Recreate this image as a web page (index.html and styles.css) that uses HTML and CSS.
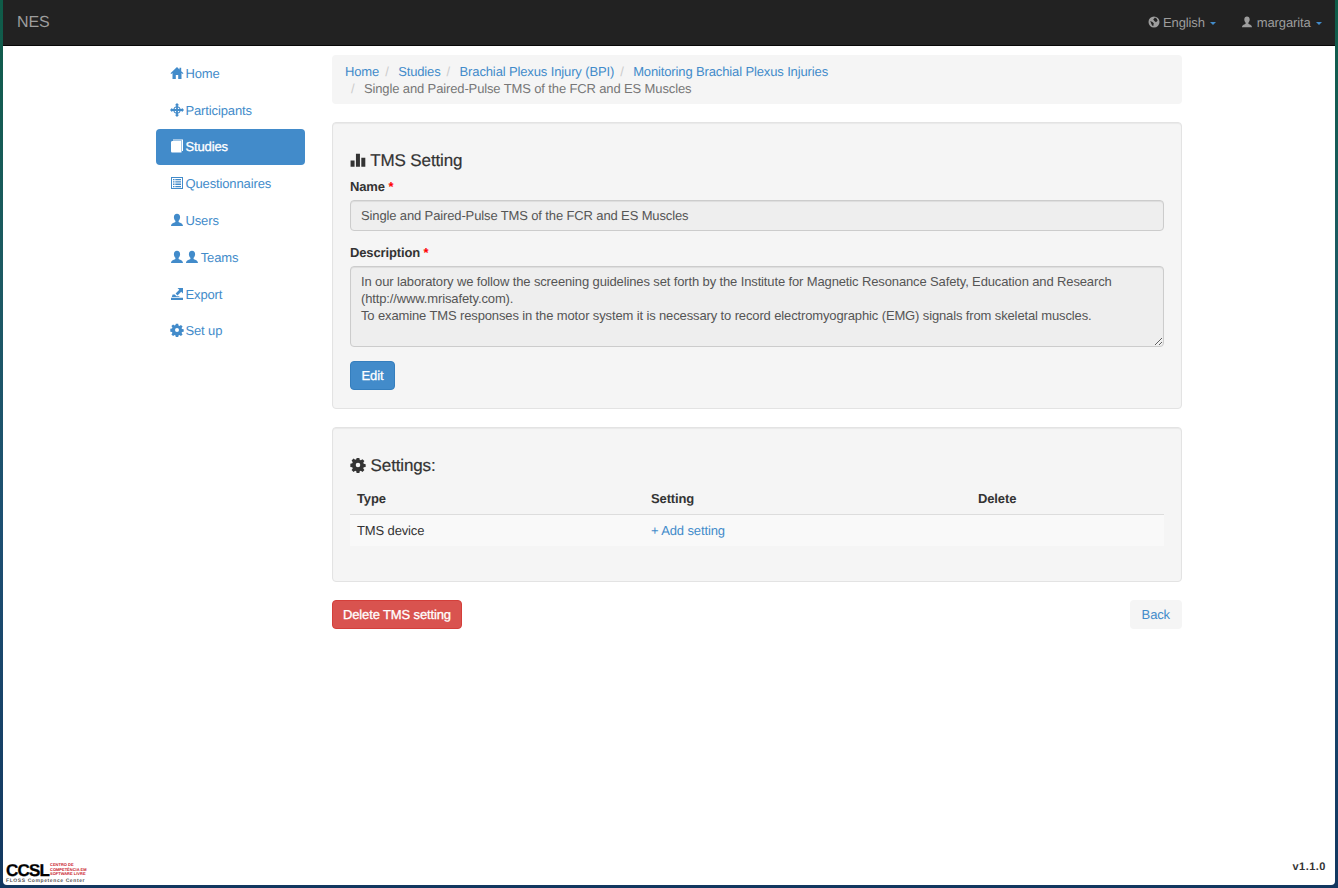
FILE: index.html
```html
<!DOCTYPE html>
<html>
<head>
<meta charset="UTF-8">
<title>NES</title>
<link rel="stylesheet" href="styles.css">
</head>
<body>
	<div class="desktop">
		<div class="page">
			<nav class="navbar">
				<a class="brand">NES</a>
				<div class="nav-right">
					<a class="nav-item">
						<svg class="icon" viewBox="0 0 12 12"><path fill-rule="evenodd" d="M6 .5a5.500 5.500 0 1 0 0 11 5.500 5.500 0 0 0 0-11zM7 1.600 8.800 2.700 9.600 4.800 7.900 6.200 6.400 5 5.200 3.400zM2.200 5 4.400 6l1.400 1.300-.5 2.700-1.200-.6-1-2.200z"/></svg>
						English <span class="caret"></span>
					</a>
					<a class="nav-item">
						<svg class="icon" viewBox="0 0 12 12"><path d="M6 .6c1.700 0 2.700 1.300 2.700 3 0 1.300-.6 2.500-1.300 3.100v1c.6.500 3.600 1 3.600 3.500H1c0-2.500 3-3 3.600-3.500v-1C3.900 6.100 3.300 4.900 3.300 3.600c0-1.700 1-3 2.700-3z"/></svg>
						margarita <span class="caret"></span>
					</a>
				</div>
			</nav>

			<div class="content">
				<ul class="sidebar">
					<li><a>
						<svg class="icon" viewBox="0 0 14 14"><path d="M7 1 0.500 7.200 1.300 8 2.500 7v6h3.300V9h2.400v4h3.300V7l1.200 1 .8-.8L11.200 5.200V1.800H9.500v1.700z"/></svg>
						Home</a></li>
					<li><a>
						<svg class="icon" viewBox="0 0 14 14"><path fill-rule="evenodd" d="M7 0 9.200 2.200H7.900v1.100a3.900 3.900 0 0 1 2.800 2.800h1.100V4.800L14 7l-2.200 2.200V7.900h-1.100a3.900 3.900 0 0 1-2.800 2.800v1.100h1.300L7 14l-2.200-2.200h1.300v-1.100a3.900 3.900 0 0 1-2.800-2.800H2.200v1.300L0 7l2.200-2.200v1.300h1.100a3.900 3.900 0 0 1 2.800-2.800V2.200H4.800zM6.100 4.500a2.700 2.700 0 0 0-1.600 1.600h1.600zm1.800 0v1.600h1.600a2.700 2.700 0 0 0-1.600-1.600zM4.500 7.900a2.700 2.700 0 0 0 1.600 1.600V7.900zm3.400 0v1.600a2.700 2.700 0 0 0 1.600-1.600z"/></svg>
						Participants</a></li>
					<li class="active"><a>
						<svg class="icon" viewBox="0 0 14 14"><path d="M3 .5h10v11.500h-1V1.500H3zM2.500 2h9v11.500h-9C1.500 13.500 1 13 1 12V3.500C1 2.700 1.500 2 2.500 2z"/></svg>
						Studies</a></li>
					<li><a>
						<svg class="icon" viewBox="0 0 14 14"><path fill-rule="evenodd" d="M1 1h12v12H1zM2 2v10h10V2zM3 3h1.500v1.300H3zM5.300 3H11v1.300H5.300zM3 5.300h1.500v1.300H3zM5.300 5.300H11v1.300H5.300zM3 7.600h1.500v1.300H3zM5.300 7.600H11v1.300H5.300zM3 9.900h1.500v1.300H3zM5.300 9.900H11v1.300H5.300z"/></svg>
						Questionnaires</a></li>
					<li><a>
						<svg class="icon" viewBox="0 0 14 14"><path d="M7 .8c2 0 3.100 1.500 3.100 3.400 0 1.500-.7 2.900-1.500 3.600v1.200c.7.600 4.400 1.100 4.400 4H1c0-2.900 3.700-3.400 4.400-4V7.800C4.600 7.100 3.900 5.700 3.900 4.200 3.900 2.300 5 .8 7 .8z"/></svg>
						Users</a></li>
					<li><a>
						<svg class="icon" viewBox="0 0 14 14"><path d="M7 .8c2 0 3.100 1.500 3.100 3.400 0 1.500-.7 2.900-1.500 3.600v1.200c.7.600 4.400 1.100 4.400 4H1c0-2.900 3.700-3.400 4.400-4V7.800C4.600 7.100 3.900 5.700 3.900 4.200 3.900 2.300 5 .8 7 .8z"/></svg>
						<svg class="icon" viewBox="0 0 14 14"><path d="M7 .8c2 0 3.100 1.500 3.100 3.400 0 1.500-.7 2.900-1.500 3.600v1.200c.7.600 4.400 1.100 4.400 4H1c0-2.900 3.700-3.400 4.400-4V7.800C4.600 7.100 3.900 5.700 3.900 4.200 3.900 2.300 5 .8 7 .8z"/></svg>
						Teams</a></li>
					<li><a>
						<svg class="icon" viewBox="0 0 14 14"><path d="M7.500 1H13v5.500l-1.800-1.800-3.700 3.700-1.900-1.900 3.700-3.700zM2.600 7.500h2.200L6.500 9.300H9l.7.7H1.800zM1 10.800h12V13H1z"/></svg>
						Export</a></li>
					<li><a>
						<svg class="icon" viewBox="0 0 14 14"><path fill-rule="evenodd" d="M5.800 .8h2.400l.3 1.700 1 .4 1.400-1 1.700 1.700-1 1.400.4 1 1.700.3v2.400l-1.700.3-.4 1 1 1.400-1.700 1.700-1.400-1-1 .4-.3 1.700H5.800l-.3-1.700-1-.4-1.400 1-1.700-1.700 1-1.400-.4-1-1.700-.3V5.800l1.700-.3.4-1-1-1.400 1.700-1.700 1.400 1 1-.4zM7 5a2 2 0 1 0 0 4 2 2 0 0 0 0-4z"/></svg>
						Set up</a></li>
				</ul>

				<main class="main">
					<ol class="breadcrumb">
						<li><a>Home</a></li>
						<li><a>Studies</a></li>
						<li><a>Brachial Plexus Injury (BPI)</a></li>
						<li><a>Monitoring Brachial Plexus Injuries</a></li>
						<li class="current">Single and Paired-Pulse TMS of the FCR and ES Muscles</li>
					</ol>

					<section class="well">
						<h4>
							<svg class="icon" viewBox="0 0 14 14"><path d="M.5 7.500h3.500V13H.5zM5.200 1.500h3.500V13H5.200zM9.900 5h3.500v8H9.900z"/></svg>
							TMS Setting
						</h4>
						<label>Name <span class="required">*</span></label>
						<div class="form-control">Single and Paired-Pulse TMS of the FCR and ES Muscles</div>
						<label class="desc-label">Description <span class="required">*</span></label>
						<textarea class="form-control area" rows="4" disabled>In our laboratory we follow the screening guidelines set forth by the Institute for Magnetic Resonance Safety, Education and Research (http://www.mrisafety.com).
To examine TMS responses in the motor system it is necessary to record electromyographic (EMG) signals from skeletal muscles.</textarea>
						<a class="btn btn-primary">Edit</a>
					</section>

					<section class="well well-settings">
						<h4>
							<svg class="icon" viewBox="0 0 14 14"><path fill-rule="evenodd" d="M5.800 .8h2.400l.3 1.700 1 .4 1.400-1 1.700 1.700-1 1.400.4 1 1.700.3v2.400l-1.700.3-.4 1 1 1.400-1.700 1.700-1.400-1-1 .4-.3 1.700H5.800l-.3-1.700-1-.4-1.400 1-1.700-1.700 1-1.400-.4-1-1.700-.3V5.800l1.700-.3.4-1-1-1.400 1.700-1.700 1.400 1 1-.4zM7 5a2 2 0 1 0 0 4 2 2 0 0 0 0-4z"/></svg>
							Settings:
						</h4>
						<table class="table">
							<thead>
								<tr><th class="col-type">Type</th><th class="col-setting">Setting</th><th>Delete</th></tr>
							</thead>
							<tbody>
								<tr><td>TMS device</td><td><a>+ Add setting</a></td><td></td></tr>
							</tbody>
						</table>
					</section>

					<div class="actions">
						<a class="btn btn-danger">Delete TMS setting</a>
						<a class="btn btn-back">Back</a>
					</div>
				</main>
			</div>

			<footer class="footer">
				<div class="logo">
					<span class="logo-ccsl">CCSL</span>
					<span class="logo-red">CENTRO DE<br>COMPETÊNCIA EM<br>SOFTWARE LIVRE</span>
					<span class="logo-sub">FLOSS Competence Center</span>
				</div>
				<div class="version">v1.1.0</div>
			</footer>
		</div>
	</div>
</body>
</html>
```

FILE: styles.css
```css
* {
	box-sizing: border-box;
}

html, body {
	height: 100%;
}

body {
	margin: 0;
	font-family: "Liberation Sans", Arial, sans-serif;
	font-size: 13px;
	letter-spacing: -.13px;
	line-height: 17px;
	color: #333;
	text-rendering: geometricPrecision;
}

a {
	color: #428bca;
	text-decoration: none;
}

.desktop {
	height: 888px;
	padding: 0 3px 3px;
	overflow: hidden;
	background: linear-gradient(180deg, #0f5c48 0%, #1c5a62 30%, #1d4f72 60%, #12375f 100%);
}

.page {
	height: 100%;
	display: flex;
	flex-direction: column;
	background: #fff;
	border-radius: 0 0 4px 4px;
}

.icon {
	width: 14px;
	height: 14px;
	fill: currentColor;
	vertical-align: -2px;
}

/* top bar */
.navbar {
	height: 46px;
	flex: none;
	display: flex;
	justify-content: space-between;
	align-items: center;
	background: #222;
	border-bottom: 1px solid #080808;
	padding: 0 13px 0 14px;
}

.brand {
	font-size: 16px;
	color: #9d9d9d;
}

.nav-right {
	display: flex;
	gap: 25px;
}

.nav-item {
	color: #9d9d9d;
}

.nav-item .icon {
	width: 12px;
	height: 12px;
	vertical-align: -1px;
}

.caret {
	display: inline-block;
	width: 0;
	height: 0;
	margin-left: 2px;
	vertical-align: middle;
	border-top: 3px solid #428bca;
	border-left: 3px solid transparent;
	border-right: 3px solid transparent;
}

/* sidebar + main */
.content {
	display: flex;
	flex: 1;
	padding: 9px 0 0 153px;
	gap: 27px;
}

.sidebar {
	list-style: none;
	width: 149px;
	flex: none;
	margin: .8px 0 0;
	padding: 0;
}

.sidebar li {
	margin-bottom: .8px;
}

.sidebar a {
	display: block;
	padding: 9px 14px;
	line-height: 18px;
	border-radius: 4px;
}

.sidebar .icon {
	margin-right: -2px;
}

.sidebar .active a {
	background: #428bca;
	color: #fff;
	-webkit-text-stroke: .3px #fff;
}

.main {
	width: 850px;
	flex: none;
}

.breadcrumb {
	list-style: none;
	display: flex;
	flex-wrap: wrap;
	margin: 0 0 18px;
	padding: 8px 13px 7px;
	background: #f5f5f5;
	border-radius: 4px;
}

.breadcrumb li + li:before {
	content: "/\00a0";
	color: #ccc;
	padding: 0 6px;
}

.breadcrumb .current {
	color: #777;
}

.well {
	background: #f5f5f5;
	border: 1px solid #e3e3e3;
	border-radius: 4px;
	padding: 28px 17px 18px;
	margin-bottom: 18px;
	box-shadow: inset 0 1px 1px rgba(0, 0, 0, .05);
}

.well h4 {
	margin: 0 0 7px;
	font-size: 17px;
	line-height: 20px;
	font-weight: 500;
	-webkit-text-stroke: .2px #333;
}

.well h4 .icon {
	width: 16px;
	height: 16px;
}

label {
	display: block;
	font-weight: bold;
	margin-bottom: 5px;
}

.required {
	color: #f00;
}

.form-control {
	display: block;
	width: 100%;
	height: 31px;
	padding: 6px 10px;
	background: #eee;
	border: 1px solid #ccc;
	border-radius: 4px;
	color: #555;
	font: inherit;
	letter-spacing: inherit;
	box-shadow: inset 0 1px 1px rgba(0, 0, 0, .075);
}

.desc-label {
	margin-top: 13px;
}

.area {
	height: 81px;
	color: #555;
	resize: vertical;
	margin-bottom: 14px;
}

.btn {
	display: inline-block;
	padding: 5px 11px;
	line-height: 17px;
	border: 1px solid transparent;
	border-radius: 4px;
}

.btn-primary {
	padding: 5px 10.500px;
	background: #428bca;
	border-color: #357ebd;
	color: #fff;
	-webkit-text-stroke: .3px #fff;
}

.btn-danger {
	padding: 5px 10px;
	background: #d9534f;
	border-color: #d43f3a;
	color: #fff;
	-webkit-text-stroke: .3px #fff;
}

.btn-back {
	background: #f5f5f5;
	color: #428bca;
}

.well-settings {
	padding-bottom: 35px;
}

.well-settings h4 {
	margin-bottom: 14px;
}

.table {
	width: 100%;
	border-collapse: collapse;
}

.table th {
	text-align: left;
	padding: 0 7px 7px;
	border-bottom: 1px solid #ddd;
}

.table td {
	padding: 7px;
	background: #f9f9f9;
}

.col-type {
	width: 294px;
}

.col-setting {
	width: 327px;
}

.actions {
	display: flex;
	justify-content: space-between;
}

/* bottom logo and version */
.footer {
	display: flex;
	justify-content: space-between;
	align-items: flex-end;
	padding: 0 9px 1px 3px;
}

.logo {
	display: grid;
	grid-template-columns: 44px 36px;
	width: 82px;
	color: #000;
}

.logo-ccsl {
	font-size: 17px;
	line-height: 15px;
	font-weight: bold;
	letter-spacing: -.8px;
	-webkit-text-stroke: .3px #000;
}

.logo-red {
	font-size: 4px;
	line-height: 4.500px;
	font-weight: bold;
	letter-spacing: 0;
	color: #c8202a;
	white-space: nowrap;
}

.logo-sub {
	grid-column: 1 / 3;
	font-size: 5px;
	line-height: 6px;
	font-weight: bold;
	letter-spacing: .6px;
	color: #555;
	white-space: nowrap;
}

.version {
	font-size: 11px;
	font-weight: bold;
	letter-spacing: .5px;
	padding-bottom: 8px;
}
```
